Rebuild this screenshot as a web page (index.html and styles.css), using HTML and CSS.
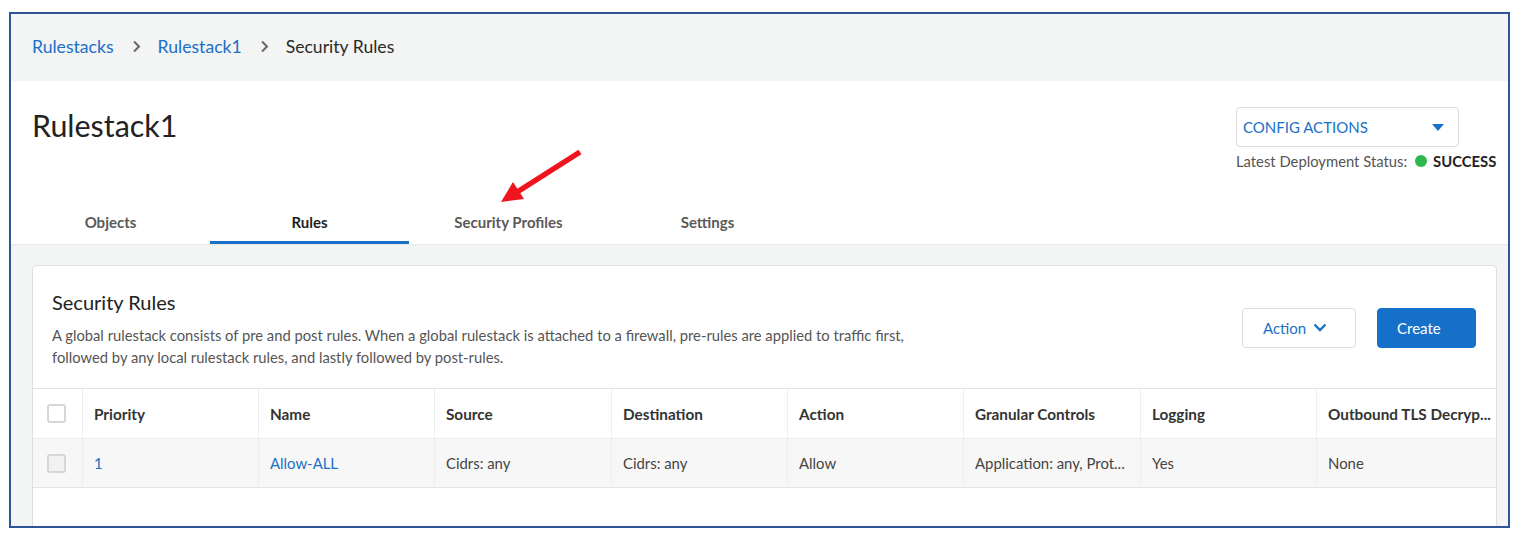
FILE: index.html
```html
<!DOCTYPE html>
<html lang="en">
<head>
<meta charset="utf-8">
<title>Security Rules</title>
<link rel="stylesheet" href="styles.css">
</head>
<body>
<div class="frame">
  <nav class="crumbs">
    <a class="crumb-link">Rulestacks</a>
    <svg class="crumb-sep" width="9" height="13" viewBox="0 0 9 13"><path d="M2 1.5L7 6.5L2 11.5" fill="none" stroke="#666" stroke-width="2"/></svg>
    <a class="crumb-link">Rulestack1</a>
    <svg class="crumb-sep" width="9" height="13" viewBox="0 0 9 13"><path d="M2 1.5L7 6.5L2 11.5" fill="none" stroke="#666" stroke-width="2"/></svg>
    <span class="crumb-current">Security Rules</span>
  </nav>
  <header class="page-head">
    <div class="head-top">
      <h1 class="page-title">Rulestack1</h1>
      <div class="config">
        <div class="config-btn">
          <span>CONFIG ACTIONS</span>
          <svg class="caret" width="12" height="7" viewBox="0 0 12 7"><path d="M0 0H12L6 7Z" fill="#1a6fc7"/></svg>
        </div>
        <div class="status">
          <span class="status-label">Latest Deployment Status:</span>
          <span class="dot"></span>
          <span class="status-val">SUCCESS</span>
        </div>
      </div>
    </div>
    <div class="tabs">
      <div class="tab">Objects</div>
      <div class="tab tab-active">Rules</div>
      <div class="tab">Security Profiles</div>
      <div class="tab">Settings</div>
    </div>
  </header>
  <main class="content">
    <section class="card">
      <div class="card-head">
        <div class="card-text">
          <h2 class="card-title">Security Rules</h2>
          <p class="card-desc">A global rulestack consists of pre and post rules. When a global rulestack is attached to a firewall, pre-rules are applied to traffic first,<br>followed by any local rulestack rules, and lastly followed by post-rules.</p>
        </div>
        <div class="card-actions">
          <button class="btn btn-outline">Action
            <svg width="14" height="9" viewBox="0 0 14 9"><path d="M1.5 1.5L7 7L12.5 1.5" fill="none" stroke="#1a6fc7" stroke-width="2.4"/></svg>
          </button>
          <button class="btn btn-primary">Create</button>
        </div>
      </div>
      <div class="table">
        <div class="row row-head">
          <div class="cell cell-check"><span class="check"></span></div>
          <div class="cell">Priority</div>
          <div class="cell">Name</div>
          <div class="cell">Source</div>
          <div class="cell">Destination</div>
          <div class="cell">Action</div>
          <div class="cell">Granular Controls</div>
          <div class="cell">Logging</div>
          <div class="cell">Outbound TLS Decryp...</div>
        </div>
        <div class="row row-data">
          <div class="cell cell-check"><span class="check check-row"></span></div>
          <div class="cell link">1</div>
          <div class="cell link">Allow-ALL</div>
          <div class="cell">Cidrs: any</div>
          <div class="cell">Cidrs: any</div>
          <div class="cell">Allow</div>
          <div class="cell">Application: any, Prot...</div>
          <div class="cell">Yes</div>
          <div class="cell">None</div>
        </div>
      </div>
    </section>
  </main>
</div>
<svg class="annotation" width="1518" height="539" viewBox="0 0 1518 539">
  <line x1="580" y1="152" x2="514" y2="194" stroke="#f0141e" stroke-width="5.5"/>
  <path d="M501 202L513 182L524 199Z" fill="#f0141e"/>
</svg>
</body>
</html>
```
FILE: styles.css
```css
* { box-sizing: border-box; }
html, body { margin: 0; padding: 0; }
body {
  background: #fff;
  font-family: Lato, "Noto Sans", "Liberation Sans", sans-serif;
  color: #222;
  width: 1518px;
  height: 539px;
  overflow: hidden;
  position: relative;
}
.frame {
  margin: 12px 0 0 9px;
  width: 1501px;
  height: 516px;
  border: 2px solid #2f5596;
  overflow: hidden;
  display: flex;
  flex-direction: column;
  background: #fff;
}
.crumbs {
  height: 67px;
  flex: none;
  background: #f3f4f4;
  display: flex;
  align-items: center;
  padding-left: 21px;
  font-size: 17.6px;
  padding-bottom: 2px;
}
.crumb-link { color: #1a6fc7; }
.crumb-current { color: #2a2a2a; }
.crumb-sep {
  margin: 0 17px 0 18px;
}
.page-head {
  height: 164px;
  flex: none;
  display: flex;
  flex-direction: column;
  background: #fff;
  border-bottom: 1px solid #e8eaea;
}
.head-top {
  display: flex;
  justify-content: space-between;
  padding: 26px 11px 0 21px;
}
.page-title {
  margin: 0;
  font-size: 30.4px;
  line-height: 36px;
  font-weight: 400;
  color: #222;
}
.config {
  width: 261px;
  display: flex;
  flex-direction: column;
  align-items: flex-start;
}
.config-btn {
  width: 223px;
  height: 40px;
  border: 1px solid #dcdcdc;
  border-radius: 4px;
  display: flex;
  align-items: center;
  justify-content: space-between;
  padding: 0 14px 0 6px;
  color: #1a6fc7;
  font-size: 15px;
}
.caret { margin-top: 1px; }
.status {
  margin-top: 4px;
  height: 20px;
  display: flex;
  align-items: center;
  font-size: 14.8px;
  white-space: nowrap;
}
.status-label { color: #555; }
.dot {
  width: 12px;
  height: 12px;
  border-radius: 50%;
  background: #2cb84c;
  margin: 0 6px 0 8px;
}
.status-val { font-weight: 700; color: #222; }
.tabs {
  margin-top: auto;
  display: flex;
  padding-left: 0;
}
.tab {
  width: 199px;
  height: 43px;
  display: flex;
  align-items: center;
  justify-content: center;
  font-size: 15px;
  font-weight: 700;
  color: #5a5a5a;
  border-bottom: 3px solid transparent;
  padding-top: 1px;
}
.tab-active {
  color: #1e1e1e;
  border-bottom-color: #1a6fc7;
}
.content {
  flex: 1;
  background: #f3f4f4;
  padding: 20px 11px 0 21px;
}
.card {
  background: #fff;
  border: 1px solid #dedede;
  height: 100%;
  border-bottom: none;
  border-radius: 5px 5px 0 0;
}
.card-head {
  display: flex;
  justify-content: space-between;
  align-items: center;
  padding: 23px 20px 20px 19px;
}
.card-title {
  margin: 0;
  font-size: 20px;
  line-height: 26px;
  font-weight: 400;
  color: #222;
}
.card-desc {
  margin: 9px 0 0;
  font-size: 14.75px;
  line-height: 22px;
  color: #555;
}
.card-actions {
  display: flex;
  gap: 21px;
  margin-top: -2px;
}
.btn {
  height: 40px;
  border-radius: 4px;
  font-family: inherit;
  font-size: 15px;
  display: flex;
  align-items: center;
  justify-content: flex-start;
}
.btn-outline {
  width: 114px;
  background: #fff;
  border: 1px solid #dcdcdc;
  color: #1a6fc7;
  gap: 7px;
  padding-left: 20px;
}
.btn-primary {
  width: 99px;
  background: #1470c8;
  border: 1px solid #1470c8;
  color: #fff;
  padding-left: 19px;
}
.table { border-top: 1px solid #e4e4e4; }
.row {
  display: grid;
  grid-template-columns: 49px 176px 176px 177px 176px 176px 177px 176px 1fr;
}
.row-head { height: 49px; background: #fff; }
.row-data {
  height: 50px;
  background: #f7f7f7;
  border-top: 1px solid #ececec;
  border-bottom: 1px solid #e4e4e4;
}
.cell {
  display: flex;
  align-items: center;
  padding-left: 11px;
  font-size: 14.9px;
  color: #444;
  white-space: nowrap;
  overflow: hidden;
  border-left: 1px solid #eeeeee;
}
.row-head .cell { font-weight: 700; color: #333; font-size: 15.3px; }
.cell-check { border-left: none; padding-left: 14px; }
.check {
  width: 19px;
  height: 19px;
  border: 2px solid #d6d6d6;
  border-radius: 3px;
  background: #fff;
}
.check-row { background: #f1f1f1; }
.link { color: #1a6fc7; }
.annotation {
  position: absolute;
  left: 0;
  top: 0;
  pointer-events: none;
}
```
